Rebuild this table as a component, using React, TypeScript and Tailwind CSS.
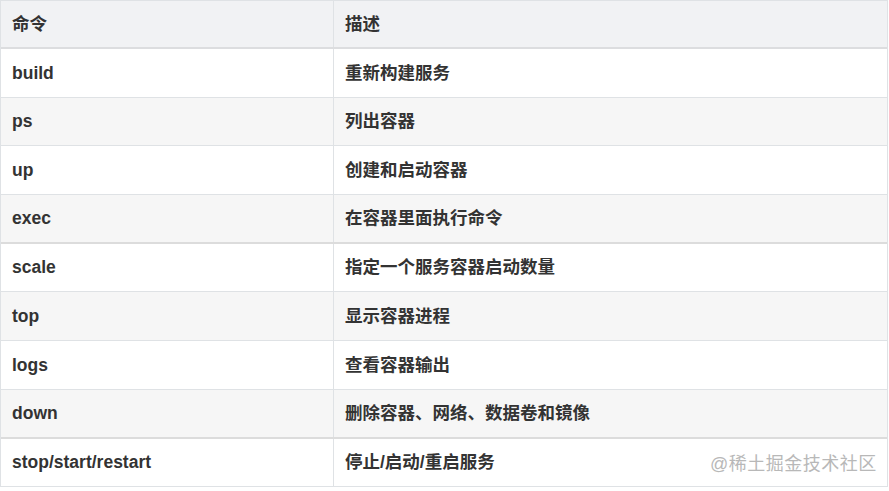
import React from "react";

const rows: [string, string][] = [
  ["build", "重新构建服务"],
  ["ps", "列出容器"],
  ["up", "创建和启动容器"],
  ["exec", "在容器里面执行命令"],
  ["scale", "指定一个服务容器启动数量"],
  ["top", "显示容器进程"],
  ["logs", "查看容器输出"],
  ["down", "删除容器、网络、数据卷和镜像"],
  ["stop/start/restart", "停止/启动/重启服务"],
];

const thick = new Set([3, 7]);

export default function App() {
  return (
    <div
      className="relative w-[889px] h-[491px] bg-white text-[#333] overflow-hidden"
      style={{ fontFamily: '"Liberation Sans", Arial, "Noto Sans CJK SC", sans-serif' }}
    >
      <div className="w-[888px] border-l border-r border-t border-[#dfe2e5]">
        <div className="grid grid-cols-[333px_1fr] h-[48px] bg-[#f1f2f4] border-b-2 border-[#dcdddf] font-bold text-[17.5px]">
          <div className="flex items-center pl-[11px] border-r border-[#dfe2e5]">命令</div>
          <div className="flex items-center pl-[11px]">描述</div>
        </div>
        {rows.map(([c, d], i) => (
          <div
            key={c}
            className={
              "grid grid-cols-[333px_1fr] font-bold text-[17.5px] " +
              (i % 2 === 1 ? "bg-[#f6f6f6] " : "bg-white ") +
              (thick.has(i) ? "h-[49px] border-b-2 border-[#dcdcdc]" : "h-[48.6px] border-b border-[#dfe2e5]")
            }
          >
            <div className="flex items-center pl-[11px] border-r border-[#dfe2e5]">{c}</div>
            <div className="flex items-center pl-[11px]">{d}</div>
          </div>
        ))}
      </div>
      <div
        className="absolute left-[710px] top-[451px] text-[18px] text-[#b8b8b8] tracking-[0.5px]"
        style={{ fontFamily: '"Liberation Sans", "Noto Sans CJK SC", sans-serif' }}
      >
        @稀土掘金技术社区
      </div>
    </div>
  );
}
